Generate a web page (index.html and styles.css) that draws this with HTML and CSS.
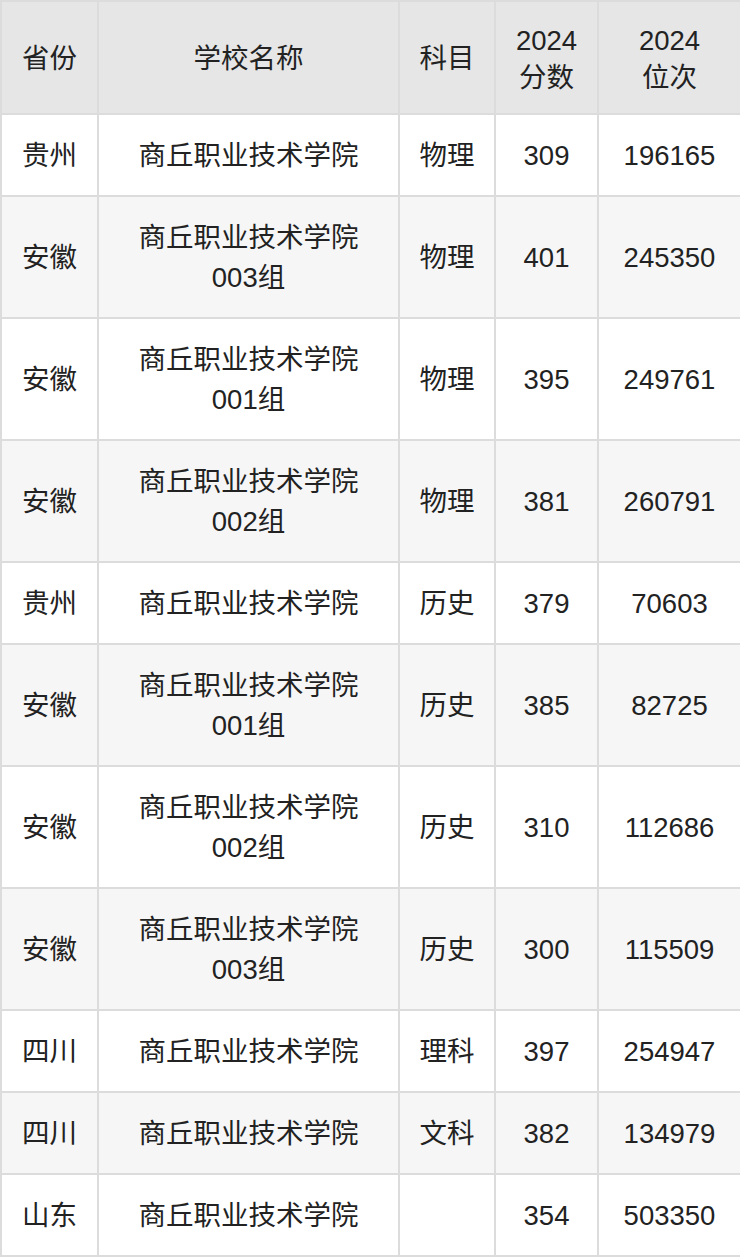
FILE: index.html
```html
<!DOCTYPE html>
<html lang="zh">
<head>
<meta charset="utf-8">
<link rel="stylesheet" href="styles.css">
</head>
<body>
<table class="score-table">
  <colgroup>
    <col class="c1"><col class="c2"><col class="c3"><col class="c4"><col class="c5">
  </colgroup>
  <thead>
    <tr><th>省份</th><th>学校名称</th><th>科目</th><th>2024<br>分数</th><th>2024<br>位次</th></tr>
  </thead>
  <tbody>
    <tr><td>贵州</td><td>商丘职业技术学院</td><td>物理</td><td>309</td><td>196165</td></tr>
    <tr><td>安徽</td><td>商丘职业技术学院<br>003组</td><td>物理</td><td>401</td><td>245350</td></tr>
    <tr><td>安徽</td><td>商丘职业技术学院<br>001组</td><td>物理</td><td>395</td><td>249761</td></tr>
    <tr><td>安徽</td><td>商丘职业技术学院<br>002组</td><td>物理</td><td>381</td><td>260791</td></tr>
    <tr><td>贵州</td><td>商丘职业技术学院</td><td>历史</td><td>379</td><td>70603</td></tr>
    <tr><td>安徽</td><td>商丘职业技术学院<br>001组</td><td>历史</td><td>385</td><td>82725</td></tr>
    <tr><td>安徽</td><td>商丘职业技术学院<br>002组</td><td>历史</td><td>310</td><td>112686</td></tr>
    <tr><td>安徽</td><td>商丘职业技术学院<br>003组</td><td>历史</td><td>300</td><td>115509</td></tr>
    <tr><td>四川</td><td>商丘职业技术学院</td><td>理科</td><td>397</td><td>254947</td></tr>
    <tr><td>四川</td><td>商丘职业技术学院</td><td>文科</td><td>382</td><td>134979</td></tr>
    <tr><td>山东</td><td>商丘职业技术学院</td><td></td><td>354</td><td>503350</td></tr>
  </tbody>
</table>
</body>
</html>
```
FILE: styles.css
```css
html, body {
  margin: 0;
  padding: 0;
  background: #ffffff;
}

.score-table {
  width: 740px;
  border-collapse: collapse;
  table-layout: fixed;
  font-family: "Liberation Sans", "Noto Sans CJK SC", sans-serif;
  font-size: 27.5px;
  color: #222222;
}

.c1 { width: 97px; }
.c2 { width: 301px; }
.c3 { width: 96px; }
.c4 { width: 103px; }
.c5 { width: 143px; }

.score-table th,
.score-table td {
  border: 2px solid #dcdcdc;
  text-align: center;
  vertical-align: middle;
  padding: 0;
}

.score-table th {
  background: #e6e6e6;
  font-weight: normal;
  line-height: 37px;
  height: 109px;
  padding-top: 2px;
}

.score-table td {
  line-height: 40px;
  padding: 21px 0 19px;
}

.score-table tbody tr:nth-child(even) td {
  background: #f6f6f6;
}
```
